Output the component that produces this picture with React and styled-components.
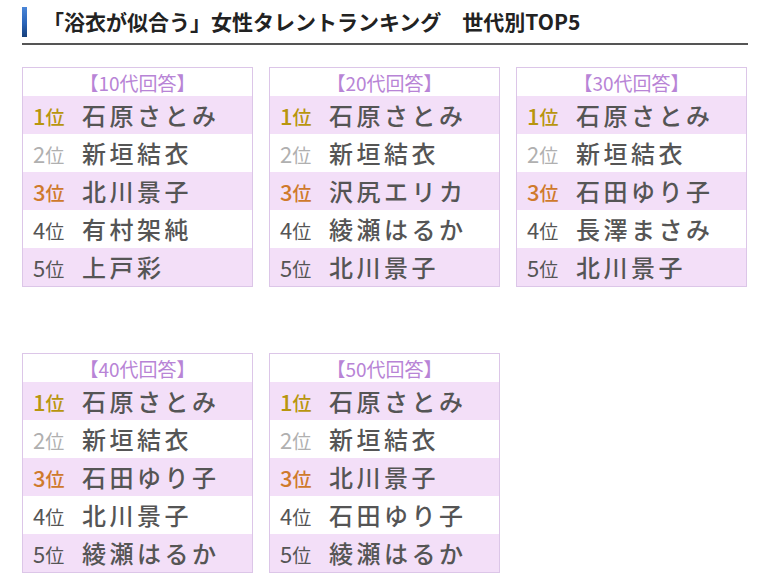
import React from "react";
import styled, { createGlobalStyle } from "styled-components";

const Global = createGlobalStyle`
  html, body { margin: 0; padding: 0; background: #fff; }
  body { font-family: "Noto Sans CJK JP", "Noto Sans", sans-serif; }
`;

const Page = styled.div`
  width: 726px;
  padding: 7px 0 0 22px;
`;

const TitleBar = styled.div`
  display: flex;
  align-items: center;
  height: 30px;
  padding-bottom: 6px;
  border-bottom: 2px solid #555;
`;

const Accent = styled.div`
  width: 5px;
  height: 30px;
  background: linear-gradient(#4a86d8 0%, #2a64b8 55%, #163f7a 100%);
  margin-right: 16px;
`;

const Title = styled.h1`
  margin: 0 0 2px;
  font-size: 21px;
  font-weight: 700;
  color: #222;
  letter-spacing: 0;
  line-height: 30px;
`;

const Grid = styled.div`
  display: grid;
  grid-template-columns: repeat(3, 231px);
  column-gap: 16px;
  row-gap: 66px;
  margin-top: 22px;
`;

const Card = styled.div`
  border: 1px solid #dcc6e8;
  background: #fff;
`;

const CardHead = styled.div`
  height: 28px;
  display: flex;
  align-items: center;
  justify-content: center;
  color: #b884d6;
  font-size: 19px;
  line-height: 1;
`;

const Row = styled.div`
  height: 38px;
  display: flex;
  align-items: center;
  padding-left: 10px;
  background: ${(p) => (p.$shade ? "#f3dff8" : "#fff")};
`;

const Rank = styled.span`
  width: 49px;
  color: ${(p) => p.$color};
  font-size: 22px;
  line-height: 1;
  display: flex;
  align-items: baseline;
  font-weight: ${(p) => (p.$bold ? 500 : 400)};
`;

const RankUnit = styled.span`
  font-size: 19px;
`;

const Name = styled.span`
  color: #555;
  font-size: 24px;
  font-weight: 500;
  letter-spacing: 3.5px;
  line-height: 1;
  white-space: nowrap;
`;

const rankColors = ["#b8960e", "#b0b0b0", "#cf7a2c", "#555", "#555"];

const data = [
  { age: "10", names: ["石原さとみ", "新垣結衣", "北川景子", "有村架純", "上戸彩"] },
  { age: "20", names: ["石原さとみ", "新垣結衣", "沢尻エリカ", "綾瀬はるか", "北川景子"] },
  { age: "30", names: ["石原さとみ", "新垣結衣", "石田ゆり子", "長澤まさみ", "北川景子"] },
  { age: "40", names: ["石原さとみ", "新垣結衣", "石田ゆり子", "北川景子", "綾瀬はるか"] },
  { age: "50", names: ["石原さとみ", "新垣結衣", "北川景子", "石田ゆり子", "綾瀬はるか"] },
];

export default function App() {
  return (
    <Page>
      <Global />
      <TitleBar>
        <Accent />
        <Title>「浴衣が似合う」女性タレントランキング　世代別TOP5</Title>
      </TitleBar>
      <Grid>
        {data.map((d) => (
          <Card key={d.age}>
            <CardHead>【{d.age}代回答】</CardHead>
            {d.names.map((n, i) => (
              <Row key={i} $shade={i % 2 === 0}>
                <Rank $color={rankColors[i]} $bold={i === 0 || i === 2}>
                  {i + 1}
                  <RankUnit>位</RankUnit>
                </Rank>
                <Name>{n}</Name>
              </Row>
            ))}
          </Card>
        ))}
      </Grid>
    </Page>
  );
}
